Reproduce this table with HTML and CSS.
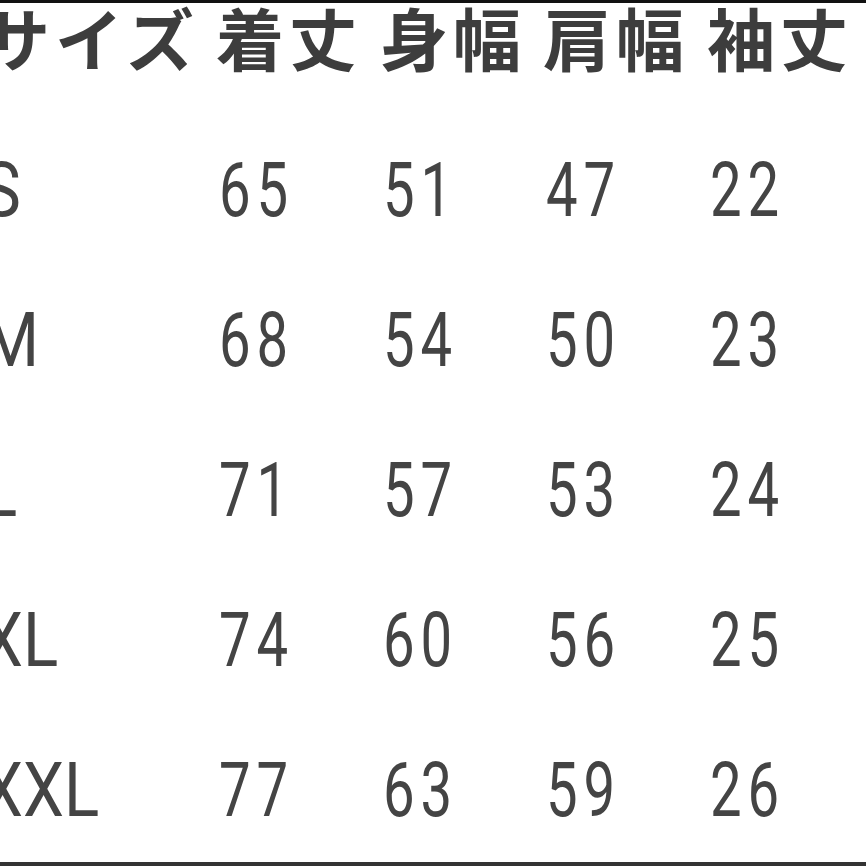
FILE: index.html
```html
<!DOCTYPE html>
<html lang="ja">
<head>
<meta charset="utf-8">
<title>サイズ表</title>
<link rel="stylesheet" href="styles.css">
</head>
<body>
<div class="chart">
  <div class="row head">
    <div class="cell label"><span class="jp">サイズ</span></div>
    <div class="cell"><span class="jp">着丈</span></div>
    <div class="cell"><span class="jp">身幅</span></div>
    <div class="cell"><span class="jp">肩幅</span></div>
    <div class="cell"><span class="jp">袖丈</span></div>
  </div>
  <div class="row body">
    <div class="cell label"><span class="lbl">S</span></div>
    <div class="cell num"><span class="n">65</span></div>
    <div class="cell num"><span class="n">51</span></div>
    <div class="cell num"><span class="n">47</span></div>
    <div class="cell num"><span class="n">22</span></div>
  </div>
  <div class="row body">
    <div class="cell label"><span class="lbl">M</span></div>
    <div class="cell num"><span class="n">68</span></div>
    <div class="cell num"><span class="n">54</span></div>
    <div class="cell num"><span class="n">50</span></div>
    <div class="cell num"><span class="n">23</span></div>
  </div>
  <div class="row body">
    <div class="cell label"><span class="lbl">L</span></div>
    <div class="cell num"><span class="n">71</span></div>
    <div class="cell num"><span class="n">57</span></div>
    <div class="cell num"><span class="n">53</span></div>
    <div class="cell num"><span class="n">24</span></div>
  </div>
  <div class="row body">
    <div class="cell label"><span class="lbl">XL</span></div>
    <div class="cell num"><span class="n">74</span></div>
    <div class="cell num"><span class="n">60</span></div>
    <div class="cell num"><span class="n">56</span></div>
    <div class="cell num"><span class="n">25</span></div>
  </div>
  <div class="row body last">
    <div class="cell label"><span class="lbl">XXL</span></div>
    <div class="cell num"><span class="n">77</span></div>
    <div class="cell num"><span class="n">63</span></div>
    <div class="cell num"><span class="n">59</span></div>
    <div class="cell num"><span class="n">26</span></div>
  </div>
</div>
</body>
</html>
```

FILE: styles.css
```css
html, body {
  margin: 0;
  padding: 0;
  background: #ffffff;
  overflow: hidden;
}

body {
  width: 866px;
  height: 866px;
}

.chart {
  margin-left: -18px;
  width: 884px;
  border-top: 3px solid #111111;
  border-bottom: 4px solid #333333;
  color: #444444;
}

.row {
  display: grid;
  grid-template-columns: 234px 164px 163px 164px 159px;
  align-items: start;
}

.head {
  height: 112px;
}

.body {
  height: 150px;
  padding-top: 37px;
  box-sizing: border-box;
}

.body.last {
  height: 147px;
}

.cell {
  white-space: nowrap;
}

.jp {
  font-family: "Noto Sans CJK JP", "Noto Sans", sans-serif;
  font-weight: 700;
  font-size: 68px;
  line-height: 68px;
  letter-spacing: 5px;
  color: #3d3d3d;
}

.num {
  padding-left: 3px;
}

.n {
  display: inline-block;
  font-family: Roboto, "Liberation Sans", sans-serif;
  font-weight: 400;
  font-size: 76px;
  line-height: 76px;
  letter-spacing: 8px;
  transform: scaleX(0.74);
  transform-origin: left center;
}

.lbl {
  display: inline-block;
  font-family: Roboto, "Liberation Sans", sans-serif;
  font-weight: 400;
  font-size: 76px;
  line-height: 76px;
  transform: scaleX(0.86);
  transform-origin: left center;
}
```
